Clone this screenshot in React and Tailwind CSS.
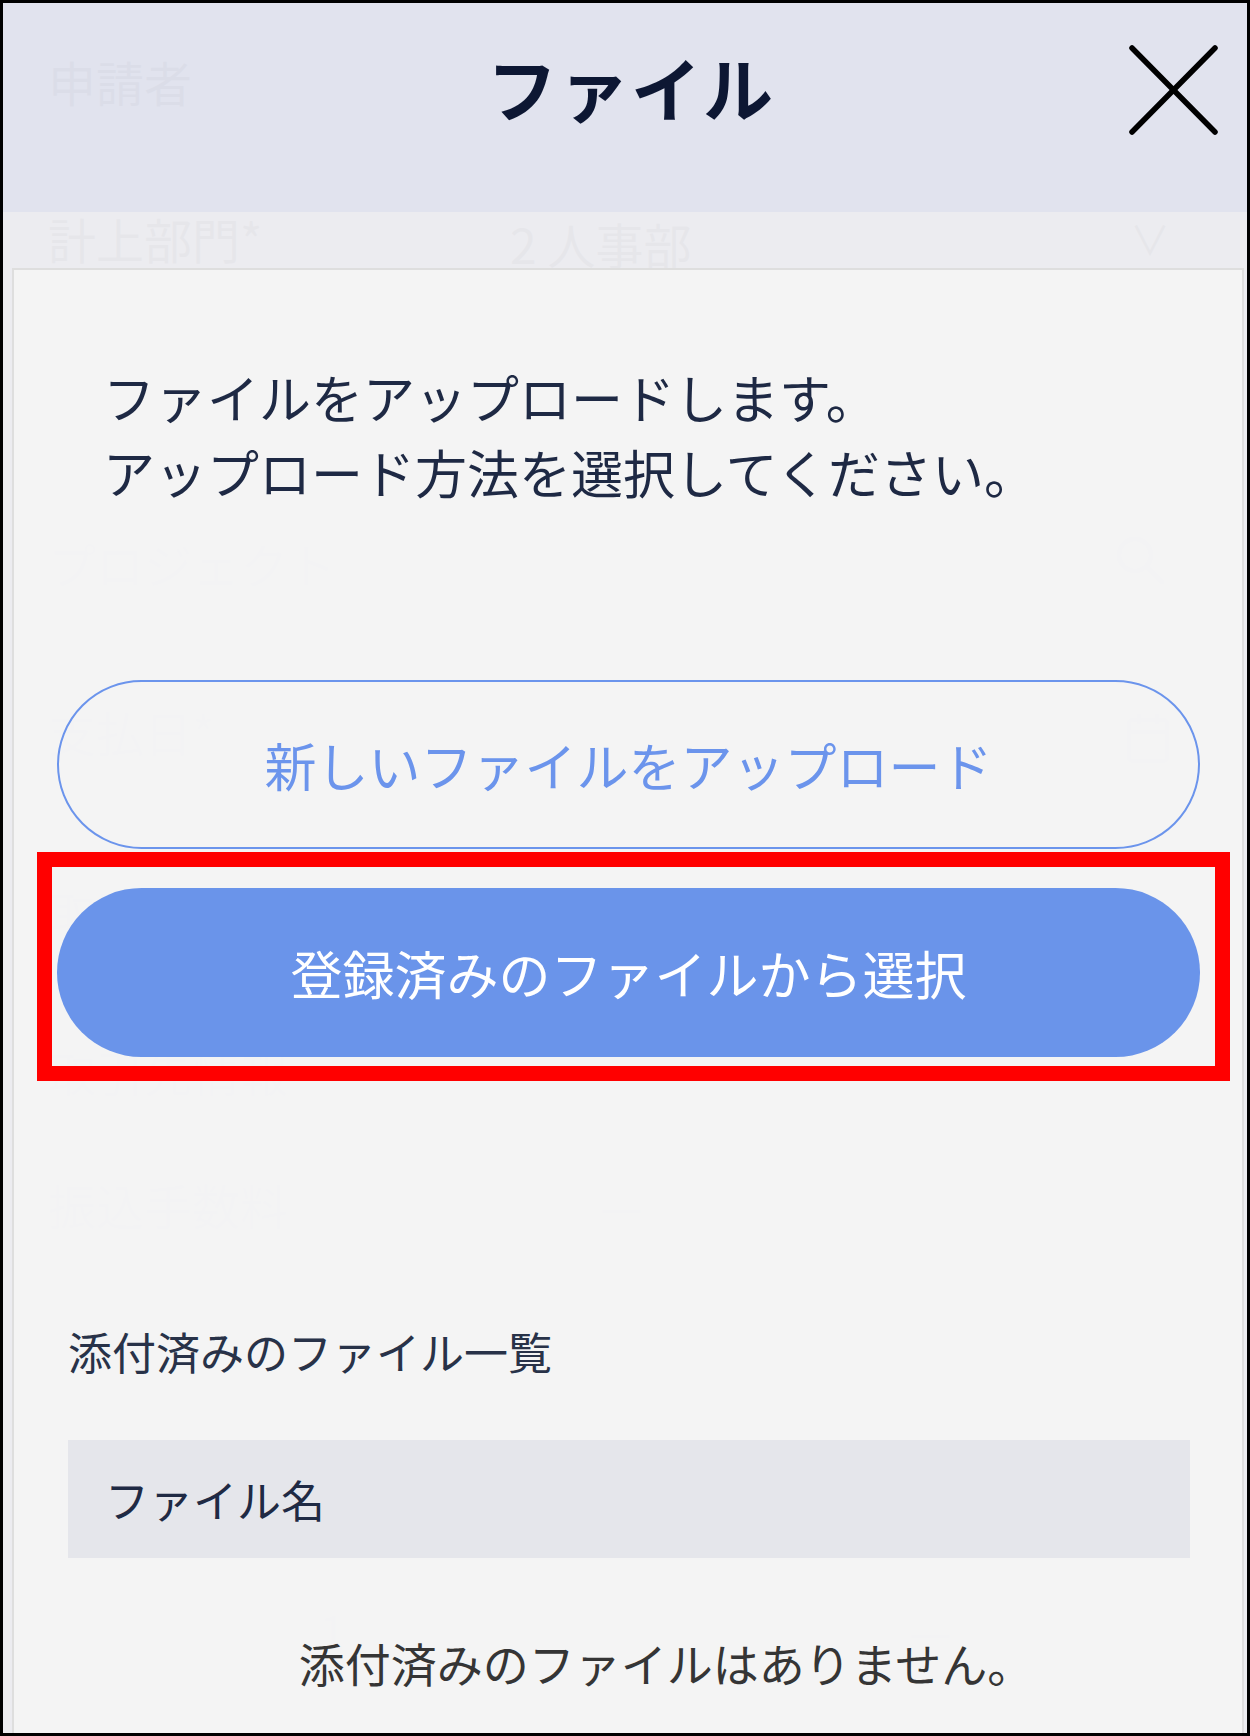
import React from "react";

function SearchGhost() {
  return (
    <div className="w-[140px] h-[135px] border border-[#d6d6d6] flex items-center justify-center">
      <svg width="60" height="60" viewBox="0 0 60 60" fill="none" stroke="#9a9a9a" strokeWidth="5" strokeLinecap="round">
        <circle cx="25" cy="25" r="16" />
        <line x1="37" y1="37" x2="52" y2="52" />
      </svg>
    </div>
  );
}

function CalendarGhost() {
  return (
    <svg width="44" height="52" viewBox="0 0 44 52" fill="none" stroke="#9a9a9a" strokeWidth="4">
      <rect x="3" y="8" width="38" height="41" rx="3" />
      <line x1="3" y1="20" x2="41" y2="20" />
      <line x1="13" y1="2" x2="13" y2="12" />
      <line x1="31" y1="2" x2="31" y2="12" />
    </svg>
  );
}

function GhostPage() {
  return (
    <div aria-hidden="true" className="flex flex-col pl-[45px] pr-[37px] text-[#a8a8a8] text-[48px] leading-[48px]">
      <div className="mt-[54px] h-[48px] flex items-center">申請者</div>
      <div className="mt-[109px] h-[48px] flex items-center">
        <span className="w-[462px]">計上部門*</span>
        <span className="mt-[10px]">2 人事部</span>
        <span className="ml-auto mr-[40px] text-[40px]">∨</span>
      </div>
      <div className="mt-[230px] h-[135px] flex items-center">
        <span className="mt-[6px]">プロジェクト</span>
        <div className="ml-auto">
          <SearchGhost />
        </div>
      </div>
      <div className="mt-[80px] h-[48px] flex items-center">
        <span>支払日*</span>
        <div className="ml-auto mr-[40px] mt-[14px]">
          <CalendarGhost />
        </div>
      </div>
      <div className="mt-[132px] h-[48px] flex items-center">取引先</div>
      <div className="mt-[112px] h-[48px] flex items-center">取引先情報</div>
      <div className="mt-[85px] h-[48px] flex items-center">
        <span className="w-[552px]">振込手数料</span>
        <span>—</span>
      </div>
      <div className="mt-[225px] h-[48px] flex items-center">
        <span className="ml-[199px] w-[630px]">明細</span>
        <span>金額</span>
      </div>
      <div className="mt-[104px] h-[48px] flex items-center">
        <span className="ml-[271px] w-[590px]">1</span>
        <span>—</span>
      </div>
    </div>
  );
}

function CloseIcon() {
  return (
    <svg width="90" height="90" viewBox="0 0 90 90" fill="none" stroke="#000000" strokeWidth="5.5" strokeLinecap="round">
      <line x1="4" y1="3" x2="87" y2="87" />
      <line x1="87" y1="3" x2="4" y2="87" />
    </svg>
  );
}

export default function App() {
  return (
    <div className="w-[1250px] h-[1736px] border-[3px] border-black relative overflow-hidden bg-[#eeeeee] font-[family-name:'Noto_Sans_CJK_JP','Noto_Sans',sans-serif]">
      <GhostPage />

      <div className="absolute inset-0 flex flex-col">
        {/* Header */}
        <div className="h-[209px] shrink-0 bg-[#e0e2eeeb] grid grid-cols-[1fr_auto_1fr] items-center pb-[36px]">
          <div />
          <div className="ml-[12px] -mt-[6px] text-[70px] leading-[80px] font-bold text-[#0d1733] tracking-[2px]">
            ファイル
          </div>
          <div className="flex justify-end pr-[29px]">
            <CloseIcon />
          </div>
        </div>

        {/* Body */}
        <div className="flex-1 flex flex-col bg-[#ebecf0eb] pt-[56px] pl-[9px] pr-[3px]">
          <div className="flex-1 flex flex-col border-t-2 border-x-2 border-[#dcdcdcee] bg-[#f4f4f4eb]">
            <p className="mt-[89px] pl-[89px] text-[52px] leading-[75px] text-[#1e2944]">
              ファイルをアップロードします。
              <br />
              アップロード方法を選択してください。
            </p>

            <button className="mt-[171px] ml-[43px] w-[1143px] h-[169px] rounded-full border-[2.5px] border-[#6b94ec] text-[#6b94ec] text-[52px] leading-[60px] flex items-center justify-center">
              新しいファイルをアップロード
            </button>

            <div className="relative mt-[39px] ml-[43px] w-[1143px]">
              <button className="w-full h-[169px] rounded-full bg-[#6a94ea] text-white text-[52px] leading-[60px] flex items-center justify-center">
                登録済みのファイルから選択
              </button>
              <div className="absolute -left-[20px] -right-[30px] -top-[36px] -bottom-[24px] border-[15px] border-[#ff0000] pointer-events-none" />
            </div>

            <div className="mt-[261px] ml-[54px] text-[44px] leading-[66px] text-[#283248]">
              添付済みのファイル一覧
            </div>

            <div className="mt-[56px] ml-[54px] w-[1122px] h-[118px] bg-[#e5e6eb] flex items-center pl-[37px] text-[44px] leading-[60px] text-[#1f2a44]">
              ファイル名
            </div>

            <div className="mt-[71px] pl-[76px] text-center text-[46px] leading-[66px] text-[#353535]">
              添付済みのファイルはありません。
            </div>
          </div>
        </div>
      </div>
    </div>
  );
}
